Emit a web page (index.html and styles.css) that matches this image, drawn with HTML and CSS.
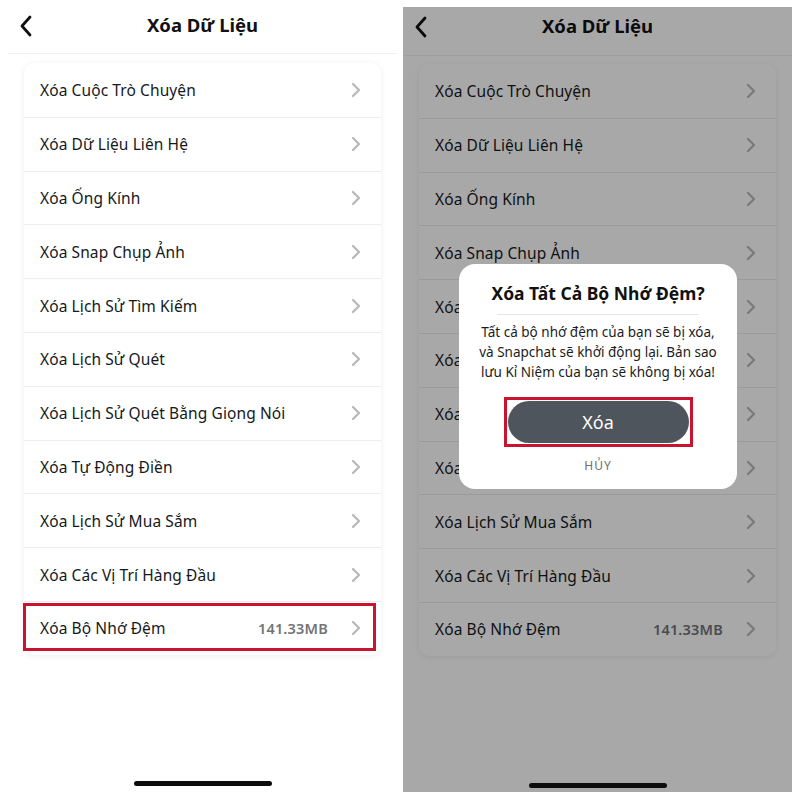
FILE: index.html
```html
<!DOCTYPE html>
<html lang="vi">
<head>
<meta charset="utf-8">
<title>Xóa Dữ Liệu</title>
<link rel="stylesheet" href="styles.css">
</head>
<body>
<section class="screen screen-left">
  <header class="header">
    <svg class="back" width="14" height="22" viewBox="0 0 14 22"><path d="M11 2 L3 11 L11 20" fill="none" stroke="#111" stroke-width="2.8" stroke-linecap="round" stroke-linejoin="round"/></svg>
    <h1 class="title">Xóa Dữ Liệu</h1>
    <span></span>
  </header>
  <div class="card">
    <div class="row"><span class="label">Xóa Cuộc Trò Chuyện</span><svg class="chev" width="10" height="16" viewBox="0 0 10 16"><path d="M2 2 L8 8 L2 14" fill="none" stroke="#b9b9bd" stroke-width="2.3" stroke-linecap="round" stroke-linejoin="round"/></svg></div>
    <div class="row"><span class="label">Xóa Dữ Liệu Liên Hệ</span><svg class="chev" width="10" height="16" viewBox="0 0 10 16"><path d="M2 2 L8 8 L2 14" fill="none" stroke="#b9b9bd" stroke-width="2.3" stroke-linecap="round" stroke-linejoin="round"/></svg></div>
    <div class="row"><span class="label">Xóa Ống Kính</span><svg class="chev" width="10" height="16" viewBox="0 0 10 16"><path d="M2 2 L8 8 L2 14" fill="none" stroke="#b9b9bd" stroke-width="2.3" stroke-linecap="round" stroke-linejoin="round"/></svg></div>
    <div class="row"><span class="label">Xóa Snap Chụp Ảnh</span><svg class="chev" width="10" height="16" viewBox="0 0 10 16"><path d="M2 2 L8 8 L2 14" fill="none" stroke="#b9b9bd" stroke-width="2.3" stroke-linecap="round" stroke-linejoin="round"/></svg></div>
    <div class="row"><span class="label">Xóa Lịch Sử Tìm Kiếm</span><svg class="chev" width="10" height="16" viewBox="0 0 10 16"><path d="M2 2 L8 8 L2 14" fill="none" stroke="#b9b9bd" stroke-width="2.3" stroke-linecap="round" stroke-linejoin="round"/></svg></div>
    <div class="row"><span class="label">Xóa Lịch Sử Quét</span><svg class="chev" width="10" height="16" viewBox="0 0 10 16"><path d="M2 2 L8 8 L2 14" fill="none" stroke="#b9b9bd" stroke-width="2.3" stroke-linecap="round" stroke-linejoin="round"/></svg></div>
    <div class="row"><span class="label">Xóa Lịch Sử Quét Bằng Giọng Nói</span><svg class="chev" width="10" height="16" viewBox="0 0 10 16"><path d="M2 2 L8 8 L2 14" fill="none" stroke="#b9b9bd" stroke-width="2.3" stroke-linecap="round" stroke-linejoin="round"/></svg></div>
    <div class="row"><span class="label">Xóa Tự Động Điền</span><svg class="chev" width="10" height="16" viewBox="0 0 10 16"><path d="M2 2 L8 8 L2 14" fill="none" stroke="#b9b9bd" stroke-width="2.3" stroke-linecap="round" stroke-linejoin="round"/></svg></div>
    <div class="row"><span class="label">Xóa Lịch Sử Mua Sắm</span><svg class="chev" width="10" height="16" viewBox="0 0 10 16"><path d="M2 2 L8 8 L2 14" fill="none" stroke="#b9b9bd" stroke-width="2.3" stroke-linecap="round" stroke-linejoin="round"/></svg></div>
    <div class="row"><span class="label">Xóa Các Vị Trí Hàng Đầu</span><svg class="chev" width="10" height="16" viewBox="0 0 10 16"><path d="M2 2 L8 8 L2 14" fill="none" stroke="#b9b9bd" stroke-width="2.3" stroke-linecap="round" stroke-linejoin="round"/></svg></div>
    <div class="row row-mark"><span class="label">Xóa Bộ Nhớ Đệm</span><span class="value">141.33MB</span><svg class="chev" width="10" height="16" viewBox="0 0 10 16"><path d="M2 2 L8 8 L2 14" fill="none" stroke="#b9b9bd" stroke-width="2.3" stroke-linecap="round" stroke-linejoin="round"/></svg><span class="mark mark-row"></span></div>
  </div>
  <div class="home"></div>
</section>

<section class="screen screen-right">
  <header class="header">
    <svg class="back" width="14" height="22" viewBox="0 0 14 22"><path d="M11 2 L3 11 L11 20" fill="none" stroke="#111" stroke-width="2.8" stroke-linecap="round" stroke-linejoin="round"/></svg>
    <h1 class="title">Xóa Dữ Liệu</h1>
    <span></span>
  </header>
  <div class="card">
    <div class="row"><span class="label">Xóa Cuộc Trò Chuyện</span><svg class="chev" width="10" height="16" viewBox="0 0 10 16"><path d="M2 2 L8 8 L2 14" fill="none" stroke="#b9b9bd" stroke-width="2.3" stroke-linecap="round" stroke-linejoin="round"/></svg></div>
    <div class="row"><span class="label">Xóa Dữ Liệu Liên Hệ</span><svg class="chev" width="10" height="16" viewBox="0 0 10 16"><path d="M2 2 L8 8 L2 14" fill="none" stroke="#b9b9bd" stroke-width="2.3" stroke-linecap="round" stroke-linejoin="round"/></svg></div>
    <div class="row"><span class="label">Xóa Ống Kính</span><svg class="chev" width="10" height="16" viewBox="0 0 10 16"><path d="M2 2 L8 8 L2 14" fill="none" stroke="#b9b9bd" stroke-width="2.3" stroke-linecap="round" stroke-linejoin="round"/></svg></div>
    <div class="row"><span class="label">Xóa Snap Chụp Ảnh</span><svg class="chev" width="10" height="16" viewBox="0 0 10 16"><path d="M2 2 L8 8 L2 14" fill="none" stroke="#b9b9bd" stroke-width="2.3" stroke-linecap="round" stroke-linejoin="round"/></svg></div>
    <div class="row"><span class="label">Xóa Lịch Sử Tìm Kiếm</span><svg class="chev" width="10" height="16" viewBox="0 0 10 16"><path d="M2 2 L8 8 L2 14" fill="none" stroke="#b9b9bd" stroke-width="2.3" stroke-linecap="round" stroke-linejoin="round"/></svg></div>
    <div class="row"><span class="label">Xóa Lịch Sử Quét</span><svg class="chev" width="10" height="16" viewBox="0 0 10 16"><path d="M2 2 L8 8 L2 14" fill="none" stroke="#b9b9bd" stroke-width="2.3" stroke-linecap="round" stroke-linejoin="round"/></svg></div>
    <div class="row"><span class="label">Xóa Lịch Sử Quét Bằng Giọng Nói</span><svg class="chev" width="10" height="16" viewBox="0 0 10 16"><path d="M2 2 L8 8 L2 14" fill="none" stroke="#b9b9bd" stroke-width="2.3" stroke-linecap="round" stroke-linejoin="round"/></svg></div>
    <div class="row"><span class="label">Xóa Tự Động Điền</span><svg class="chev" width="10" height="16" viewBox="0 0 10 16"><path d="M2 2 L8 8 L2 14" fill="none" stroke="#b9b9bd" stroke-width="2.3" stroke-linecap="round" stroke-linejoin="round"/></svg></div>
    <div class="row"><span class="label">Xóa Lịch Sử Mua Sắm</span><svg class="chev" width="10" height="16" viewBox="0 0 10 16"><path d="M2 2 L8 8 L2 14" fill="none" stroke="#b9b9bd" stroke-width="2.3" stroke-linecap="round" stroke-linejoin="round"/></svg></div>
    <div class="row"><span class="label">Xóa Các Vị Trí Hàng Đầu</span><svg class="chev" width="10" height="16" viewBox="0 0 10 16"><path d="M2 2 L8 8 L2 14" fill="none" stroke="#b9b9bd" stroke-width="2.3" stroke-linecap="round" stroke-linejoin="round"/></svg></div>
    <div class="row"><span class="label">Xóa Bộ Nhớ Đệm</span><span class="value">141.33MB</span><svg class="chev" width="10" height="16" viewBox="0 0 10 16"><path d="M2 2 L8 8 L2 14" fill="none" stroke="#b9b9bd" stroke-width="2.3" stroke-linecap="round" stroke-linejoin="round"/></svg></div>
  </div>
  <div class="dim"></div>
  <div class="dialog">
    <h2 class="dialog-title">Xóa Tất Cả Bộ Nhớ Đệm?</h2>
    <div class="dialog-sep"></div>
    <p class="dialog-body">Tất cả bộ nhớ đệm của bạn sẽ bị xóa, và Snapchat sẽ khởi động lại. Bản sao lưu Kỉ Niệm của bạn sẽ không bị xóa!</p>
    <div class="btn-wrap">
      <button class="btn">Xóa</button>
      <span class="mark mark-btn"></span>
    </div>
    <div class="cancel">HỦY</div>
  </div>
  <div class="home home-top"></div>
</section>
</body>
</html>
```
FILE: styles.css
```css
* { box-sizing: border-box; }

body {
  margin: 0;
  width: 800px;
  height: 800px;
  background: #fff;
  display: flex;
  align-items: flex-start;
  font-family: "Noto Sans", "DejaVu Sans", sans-serif;
  color: #16191c;
  overflow: hidden;
}

.screen {
  position: relative;
  width: 389px;
  background: #fff;
  overflow: hidden;
  display: flex;
  flex-direction: column;
}

.screen-left {
  margin: 5px 0 0 8px;
  height: 787px;
}

.screen-right {
  margin: 7px 0 0 6px;
  height: 785px;
}

.screen-right .header { padding-top: 8px; }
.screen-right .card { margin-top: 8px; }

.header {
  height: 49px;
  display: grid;
  grid-template-columns: 40px 1fr 40px;
  align-items: start;
  padding-top: 9px;
  border-bottom: 1px solid #f2f2f2;
}

.back {
  margin: 1px 0 0 11px;
}

.title {
  margin: 0;
  text-align: center;
  font-size: 18.5px;
  font-weight: 700;
  line-height: 22px;
  color: #111;
}

.card {
  margin: 9px 16px 0;
  background: #fff;
  border-radius: 10px;
  box-shadow: 0 1px 6px rgba(0, 0, 0, 0.07);
}

.row {
  position: relative;
  height: 53.8px;
  display: flex;
  align-items: center;
  padding: 0 20px 0 16px;
  border-top: 1px solid #ececec;
}

.row:first-child { border-top: none; }

.row::before {
  content: "";
  position: absolute;
  top: -1px;
  left: -16px;
  right: -16px;
  height: 1px;
  background: #f4f4f4;
  z-index: -1;
}

.label {
  flex: 1;
  font-size: 15.5px;
  letter-spacing: 0.1px;
  white-space: nowrap;
}

.value {
  font-size: 14.5px;
  font-weight: 600;
  color: #727479;
  margin-right: 23px;
  letter-spacing: 0.2px;
}

.chev { flex: none; }

.mark {
  position: absolute;
  border: 3px solid #c8142e;
  pointer-events: none;
}

.mark-row {
  left: -1px;
  right: 5px;
  top: 1px;
  bottom: 4px;
}

.home {
  position: absolute;
  left: 126px;
  top: 776px;
  width: 138px;
  height: 5px;
  border-radius: 3px;
  background: #0d0d0d;
}

.home-top { z-index: 3; }

.dim {
  position: absolute;
  inset: 0;
  background: rgba(0, 0, 0, 0.34);
  z-index: 1;
}

.dialog {
  position: absolute;
  z-index: 2;
  left: 56px;
  top: 257px;
  width: 278px;
  height: 225px;
  background: #fff;
  border-radius: 16px;
  padding: 17px 0 0;
  display: flex;
  flex-direction: column;
  align-items: center;
}

.dialog-title {
  margin: 0;
  font-size: 17.5px;
  font-weight: 700;
  line-height: 24px;
  color: #111;
}

.dialog-sep {
  align-self: stretch;
  margin: 9px 38px 7px;
  height: 1px;
  background: #e6e6e6;
}

.dialog-body {
  margin: 0;
  padding: 0 16px;
  text-align: center;
  font-size: 13.5px;
  line-height: 20px;
  color: #1c1c1c;
}

.btn-wrap {
  position: relative;
  margin-top: 19px;
}

.btn {
  display: block;
  width: 181px;
  height: 42px;
  border: none;
  border-radius: 21px;
  background: #4f555c;
  color: #fff;
  font-family: inherit;
  font-size: 18px;
  font-weight: 400;
}

.mark-btn {
  left: -4px;
  right: -4px;
  top: -4px;
  bottom: -4px;
}

.cancel {
  margin-top: 15px;
  font-size: 12px;
  line-height: 16px;
  letter-spacing: 1px;
  color: #6e6e6e;
}
```
